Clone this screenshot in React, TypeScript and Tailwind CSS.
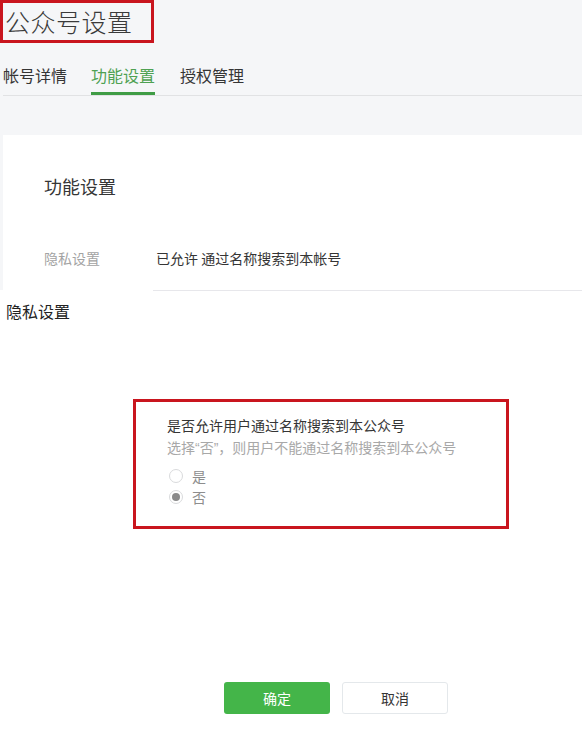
import React from 'react';

const font = { fontFamily: '"Noto Sans CJK SC", "Noto Sans", sans-serif' };

const Radio: React.FC<{ checked?: boolean; label: string }> = ({ checked, label }) => (
  <label className="flex items-center h-[21px] text-[14px] text-[#8d8d8d]">
    <span className="w-[14px] h-[14px] rounded-full border border-[#d9dadc] bg-white flex items-center justify-center">
      {checked && <span className="w-[8px] h-[8px] rounded-full bg-[#8a8a8a]" />}
    </span>
    <span className="ml-[9px] leading-none">{label}</span>
  </label>
);

const Q: React.FC<{ children: React.ReactNode }> = ({ children }) => (
  <span style={{ fontFamily: '"Liberation Sans", sans-serif' }}>{children}</span>
);

export default function App() {
  return (
    <div className="w-[582px] h-[731px] bg-white overflow-hidden" style={font}>
      {/* page header */}
      <div className="bg-[#f5f6f8] h-[135px]">
        <div className="w-[154px] h-[43px] border-[3px] border-[#c9151e] flex items-center pl-[2px]">
          <h1 className="text-[25px] leading-none text-[#3a3a3a] font-light tracking-[0.5px]">公众号设置</h1>
        </div>
        <div className="mt-[15px] ml-[3px] flex border-b border-[#e1e2e4] text-[16px] text-[#353535]">
          <div className="w-[64px] h-[37px] flex items-center pb-[3px]">帐号详情</div>
          <div className="ml-[24px] w-[64px] h-[37px] flex items-center text-[#4ea152] border-b-[3px] border-[#3f9c45] -mb-[1px]">
            功能设置
          </div>
          <div className="ml-[25px] w-[64px] h-[37px] flex items-center pb-[3px]">授权管理</div>
        </div>
      </div>

      {/* settings card */}
      <div className="bg-[#f5f6f8] pl-[3px]">
        <div className="bg-white h-[155px] pl-[41px] pt-[40px]">
          <h2 className="text-[18px] leading-[22px] text-[#353535]">功能设置</h2>
          <div className="mt-[51px] flex items-center text-[14px] leading-[20px]">
            <span className="w-[112px] text-[#a3a3a3]">隐私设置</span>
            <span className="text-[#353535]">已允许 通过名称搜索到本帐号</span>
          </div>
        </div>
      </div>
      <div className="flex">
        <div className="w-[153px]" />
        <div className="flex-1 border-t border-[#e7e7eb]" />
      </div>

      {/* privacy dialog */}
      <div className="pl-[6px] pt-[9px] text-[16px] leading-[22px] text-[#222]">隐私设置</div>
      <div className="ml-[133px] mt-[77px] w-[376px] h-[130px] border-[3px] border-[#c9151e] pl-[31px] pt-[12px]">
        <p className="text-[14px] leading-[22px] text-[#353535]">是否允许用户通过名称搜索到本公众号</p>
        <p className="text-[14px] leading-[22px] text-[#a8a8a8]">
          选择<Q>“</Q>否<Q>”</Q>，则用户不能通过名称搜索到本公众号
        </p>
        <div className="mt-[6px] ml-[2px]">
          <Radio label="是" />
          <Radio label="否" checked />
        </div>
      </div>

      {/* actions */}
      <div className="mt-[153px] ml-[224px] flex gap-[12px] text-[14px]">
        <button className="w-[106px] h-[32px] rounded-[3px] bg-[#44b549] text-white">确定</button>
        <button className="w-[106px] h-[32px] rounded-[3px] bg-white border border-[#e4e8eb] text-[#353535]">取消</button>
      </div>
    </div>
  );
}
